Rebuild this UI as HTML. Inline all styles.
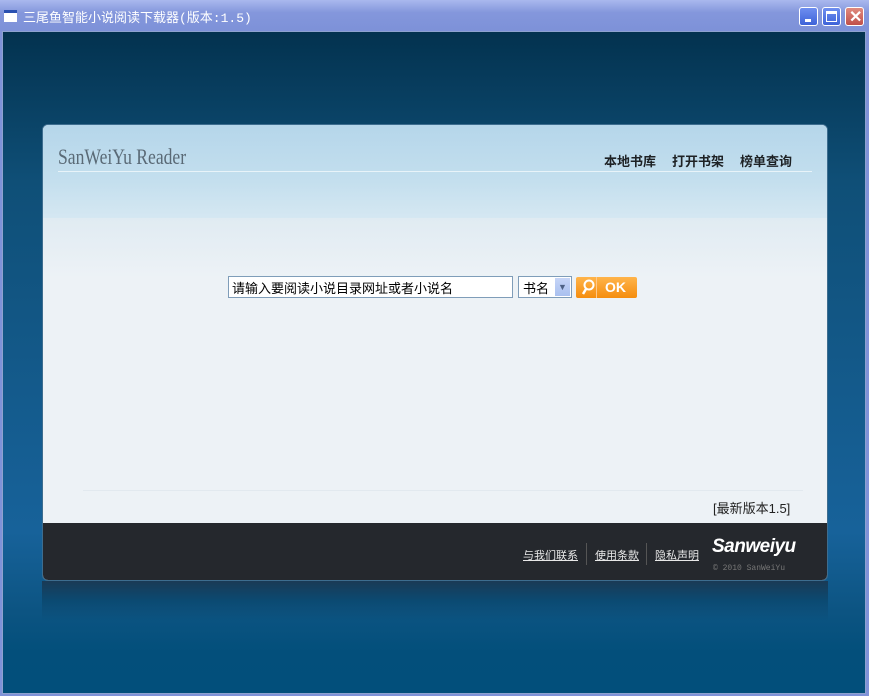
<!DOCTYPE html>
<html><head><meta charset="utf-8"><style>
*{margin:0;padding:0;box-sizing:border-box}
body{width:869px;height:696px;overflow:hidden;background:#7f92d8;font-family:"Liberation Sans","Noto Sans CJK SC",sans-serif;position:relative}
#title{position:absolute;left:0;top:0;width:869px;height:31px;background:linear-gradient(#a9b8ee,#8497dc 40%,#7d91d8);}
#title .t{position:absolute;left:23px;top:7px;color:#fff;font-family:"Liberation Mono","Noto Sans CJK SC",monospace;font-size:13px;letter-spacing:0px}
#title .ic{position:absolute;left:4px;top:10px;width:13px;height:12px;background:#fff;border-top:3px solid #2a50b0}
.btn{position:absolute;top:7px;width:19px;height:19px;border:1px solid #fff;border-radius:3px;background:linear-gradient(#6e8ef0,#3e63d8)}
#bg{position:absolute;left:2px;top:31px;width:864px;height:663px;background:linear-gradient(#03324f 0px,#0f4f77 150px,#17629a 500px,#0c5482 580px,#034f7b 620px,#024f7b);border:1px solid #8ea2cf}
#refl{position:absolute;left:42px;top:581px;width:786px;height:40px;background:linear-gradient(#1a3a55,#0b4a72 20px,rgba(2,79,123,0))}
#panel{position:absolute;left:42px;top:124px;width:786px;height:457px;border-radius:6px;overflow:hidden;border:1px solid #3d6d8f;background:#edf2f6}
#hd{position:absolute;left:0;top:0;width:100%;height:95px;background:linear-gradient(#b5d6ea,#c4dfee 60%,#d6e8f2)}
#hd2{position:absolute;left:0;top:93px;width:100%;height:60px;background:linear-gradient(#e0ebf2,#edf2f6)}
.logo{position:absolute;left:15px;top:19px;font-family:"Liberation Serif",serif;font-size:22px;color:#5a6a76;transform:scaleX(.8);transform-origin:left}
.line{position:absolute;left:15px;top:46px;width:754px;height:1px;background:#e8f3f9}
.nav{position:absolute;top:26px;font-size:13px;font-weight:bold;color:#1e2225}
#inp{position:absolute;left:185px;top:151px;width:285px;height:22px;background:#fff;border:1px solid #7f9db9;font-size:13px;padding:1px 3px;color:#000}
#sel{position:absolute;left:475px;top:151px;width:54px;height:22px;background:#fff;border:1px solid #7f9db9;font-size:13px;padding:1px 4px}
#sel .a{position:absolute;right:1px;top:1px;width:15px;height:18px;background:linear-gradient(#c6d5f7,#a9c0ef);color:#4d6185;font-size:9px;text-align:center;line-height:18px}
#ok{position:absolute;left:533px;top:152px;width:61px;height:21px;background:linear-gradient(#ffb44a,#f58d0e);border-radius:2px;color:#fff;font-weight:bold;font-size:14px}
#ver{position:absolute;left:670px;top:373px;font-size:13px;color:#222}
#sep{position:absolute;left:40px;top:365px;width:720px;height:1px;background:#e2e9ef}
#ft{position:absolute;left:0;top:398px;width:100%;height:59px;background:#25282d}
.fl{position:absolute;top:24px;font-size:11px;color:#e8e8e8;text-decoration:underline}
.vs{position:absolute;top:20px;width:1px;height:22px;background:#555}
</style></head><body>
<div id="title"><div class="ic"></div><div class="t">三尾鱼智能小说阅读下载器(版本:1.5)</div>
<div class="btn" style="left:799px"><div style="position:absolute;left:5px;top:11px;width:6px;height:3px;background:#fff"></div></div>
<div class="btn" style="left:822px"><div style="position:absolute;left:3px;top:3px;width:11px;height:11px;border:1px solid #fff;border-top:3px solid #fff"></div></div>
<div class="btn" style="left:845px;background:linear-gradient(#e08a7e,#c0504a)"><div style="position:absolute;left:3px;top:-1px;color:#fff;font-size:16px;font-weight:bold">✕</div></div>
</div>
<div id="bg"></div>
<div id="refl"></div>
<div id="panel">
<div id="hd"></div><div id="hd2"></div>
<div class="logo">SanWeiYu Reader</div>
<div class="line"></div>
<div class="nav" style="left:561px">本地书库</div>
<div class="nav" style="left:629px">打开书架</div>
<div class="nav" style="left:697px">榜单查询</div>
<div id="inp">请输入要阅读小说目录网址或者小说名</div>
<div id="sel">书名<div class="a">▼</div></div>
<div id="ok"><svg width="20" height="21" style="position:absolute;left:2px;top:0"><circle cx="11" cy="8" r="4.5" fill="none" stroke="#fff" stroke-width="2"/><line x1="8" y1="12" x2="5" y2="17" stroke="#fff" stroke-width="2.5"/></svg><div style="position:absolute;left:20px;top:0;width:1px;height:21px;background:#ffc98a"></div><span style="position:absolute;left:29px;top:2px">OK</span></div>
<div id="sep"></div>
<div id="ver">[最新版本1.5]</div>
<div id="ft">
<div class="fl" style="left:480px">与我们联系</div>
<div class="vs" style="left:543px"></div>
<div class="fl" style="left:552px">使用条款</div>
<div class="vs" style="left:603px"></div>
<div class="fl" style="left:612px">隐私声明</div>
<div style="position:absolute;left:669px;top:13px;color:#fff;font-weight:bold;font-style:italic;font-size:19px;letter-spacing:-0.5px">Sanweiyu</div>
<div style="position:absolute;left:670px;top:41px;color:#777;font-size:8px;font-family:'Liberation Mono',monospace">© 2010 SanWeiYu</div>
</div>
</div>
</body></html>
